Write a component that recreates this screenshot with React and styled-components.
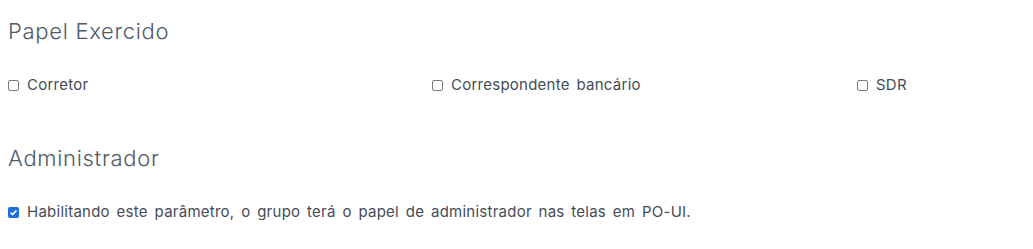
import React from "react";
import styled, { createGlobalStyle } from "styled-components";

const GlobalStyle = createGlobalStyle`
  body {
    margin: 0;
    background: #ffffff;
    font-family: Inter, "Noto Sans", sans-serif;
  }
`;

const Page = styled.div`
  display: flex;
  flex-direction: column;
  gap: 48px;
  padding: 16px 9px 0 8px;
`;

const Section = styled.section``;

const Title = styled.h2`
  margin: 0 0 29px 0;
  font-size: 22px;
  font-weight: 300;
  letter-spacing: 0.7px;
  color: #4f5966;
  line-height: 30px;
`;

const Row = styled.div`
  display: grid;
  grid-template-columns: 424px 425px 1fr;
`;

const Option = styled.label`
  display: flex;
  align-items: center;
  gap: 8px;
  font-size: 15px;
  letter-spacing: 0.25px;
  word-spacing: 2.3px;
  color: #454c57;
  line-height: 20px;
  cursor: pointer;
`;

const Box = styled.span`
  width: 11px;
  height: 11px;
  box-sizing: border-box;
  border-radius: 2px;
  border: ${(p) => (p.checked ? "none" : "1px solid #7d7d7d")};
  background: ${(p) => (p.checked ? "#1a6fdc" : "#fff")};
  display: inline-flex;
  align-items: center;
  justify-content: center;
  flex-shrink: 0;
`;

function Check({ checked, label }) {
  return (
    <Option>
      <Box checked={checked}>
        {checked ? (
          <svg width="9" height="9" viewBox="0 0 10 10">
            <path d="M1.8 5.2 L4 7.3 L8.3 2.6" fill="none" stroke="#fff" strokeWidth="1.8" />
          </svg>
        ) : null}
      </Box>
      {label}
    </Option>
  );
}

export default function App() {
  return (
    <Page>
      <GlobalStyle />
      <Section>
        <Title>Papel Exercido</Title>
        <Row>
          <Check label="Corretor" />
          <Check label="Correspondente bancário" />
          <Check label="SDR" />
        </Row>
      </Section>
      <Section>
        <Title>Administrador</Title>
        <Check checked label="Habilitando este parâmetro, o grupo terá o papel de administrador nas telas em PO-UI." />
      </Section>
    </Page>
  );
}
